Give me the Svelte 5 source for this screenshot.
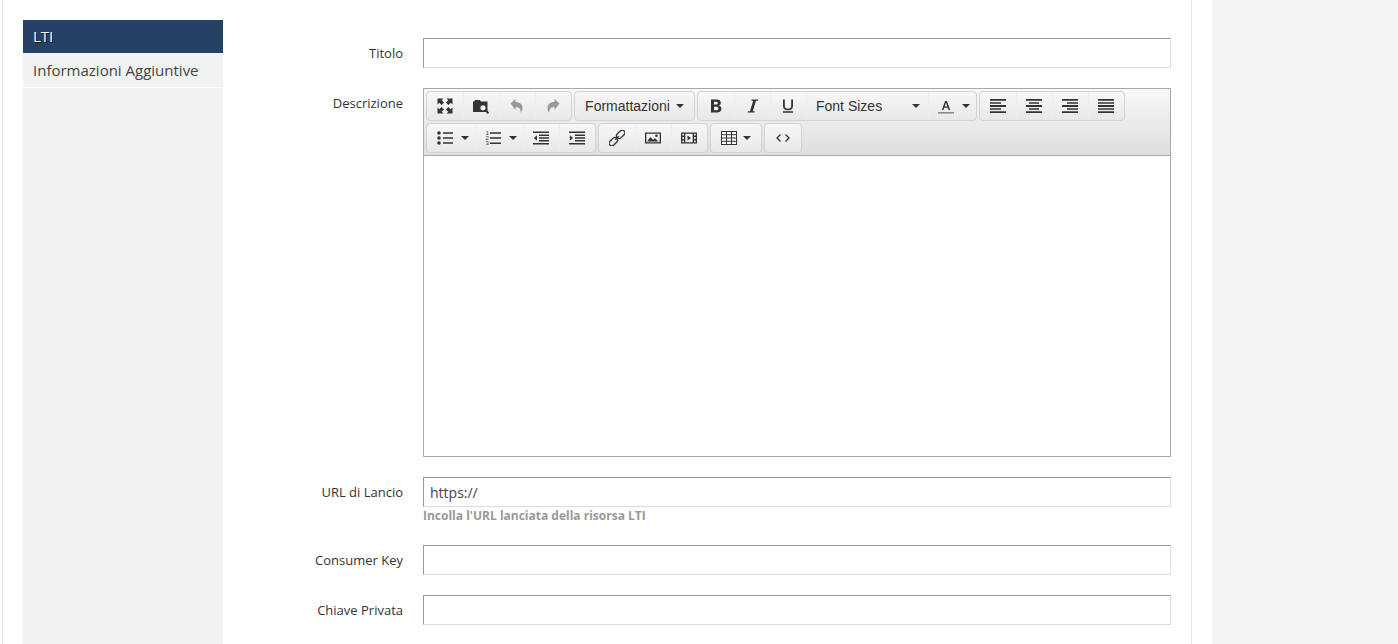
<script>
  const icons = {
    expand: 'M.5.5h6L4.700 2.300 7 4.600 4.600 7 2.300 4.700.5 6.500zM15.500.5v6L13.700 4.700 11.400 7 9 4.600 11.300 2.300 9.500.5zM.5 15.500v-6l1.800 1.800L4.600 9 7 11.400 4.700 13.700 6.500 15.500zM15.500 15.500h-6l1.800-1.800L9 11.400 11.400 9l2.300 2.300 1.800-1.800z',
    undo: 'M1.500 5.500L6.500 1v3c4.500 0 7 2.500 7 6 0 2-.8 3.500-2 5 .5-3-.5-6-5-6v3z',
    redo: 'M14.500 5.500L9.500 1v3c-4.500 0-7 2.500-7 6 0 2 .8 3.500 2 5-.5-3 .5-6 5-6v3z',
    bold: 'M3 1.500h5.600c2.700 0 4.200 1.200 4.200 3.300 0 1.300-.7 2.300-1.900 2.800 1.500.4 2.500 1.600 2.500 3.100 0 2.400-1.700 3.800-4.600 3.800H3zM6 3.700v2.900h2.100c1.200 0 1.700-.5 1.700-1.500s-.6-1.400-1.700-1.400zM6 8.700v3.600h2.400c1.300 0 2-.6 2-1.800s-.7-1.800-2-1.800z',
    italic: 'M7.700 1.500h6.600l-.3 1.200h-2L8.800 13.300h1.900l-.3 1.200H3.700l.3-1.200h2L9.200 2.700H7.400z',
    underline: 'M3 1.500h1.800V8c0 1.700 1.100 2.700 3.200 2.700s3.200-1 3.200-2.700V1.500H13V8c0 2.800-1.900 4.300-5 4.300S3 10.800 3 8zM3 13.300h10v1.500H3z',
    alignLeft: 'M0 1h16v1.800H0zM0 4.200h11v1.600H0zM0 7.100h16v1.800H0zM0 10.200h11v1.600H0zM0 13.200h16v1.800H0z',
    alignCenter: 'M0 1h16v1.800H0zM3 4.200h10v1.600H3zM0 7.100h16v1.800H0zM3 10.200h10v1.600H3zM0 13.200h16v1.800H0z',
    alignRight: 'M0 1h16v1.800H0zM5 4.200h11v1.600H5zM0 7.100h16v1.800H0zM5 10.200h11v1.600H5zM0 13.200h16v1.800H0z',
    justify: 'M0 1h16v1.800H0zM0 4.200h16v1.600H0zM0 7.100h16v1.800H0zM0 10.200h16v1.600H0zM0 13.200h16v1.800H0z',
    outdent: 'M0 1.500h16v1.600H0zM6 4.500h10v1.400H6zM6 7.300h10v1.400H6zM6 10.100h10v1.400H6zM0 13h16v1.600H0zM4 5.200v5.600L.8 8z',
    indent: 'M0 1.500h16v1.600H0zM6 4.500h10v1.400H6zM6 7.300h10v1.400H6zM6 10.100h10v1.400H6zM0 13h16v1.600H0zM.8 5.200v5.600L4 8z',
    ul: 'M6 2.200h10v1.600H6zM6 7.200h10v1.600H6zM6 12.200h10v1.600H6zM2 1.200a1.800 1.800 0 1 1 0 3.600 1.800 1.800 0 0 1 0-3.600zM2 6.200a1.800 1.800 0 1 1 0 3.600 1.800 1.800 0 0 1 0-3.600zM2 11.200a1.800 1.800 0 1 1 0 3.600 1.800 1.800 0 0 1 0-3.600z',
    picture: 'M0 2.500h16v11H0zM1.300 3.800v8.400h13.400V3.800zM2 11.500l3.500-4.500 2.500 2.700 2-1.400 3.500 3.200zM11.500 4.500a1.300 1.300 0 1 1 0 2.600 1.300 1.300 0 0 1 0-2.600z',
    film: 'M0 2.500h16v11H0zM3 3.700H1.300v1.900H3zM3 7H1.300v2H3zM3 10.400H1.300v1.900H3zM14.700 3.700H13v1.900h1.700zM14.700 7H13v2h1.700zM14.700 10.400H13v1.900h1.700zM4.300 3.700v8.600h7.400V3.700zM6.500 5.500L10 8l-3.500 2.500z'
  };

  const row1 = [
    [{ icon: 'expand' }, { icon: 'folder' }, { icon: 'undo', off: true }, { icon: 'redo', off: true }],
    [{ text: 'Formattazioni', caret: true, w: 119 }],
    [
      { icon: 'bold' }, { icon: 'italic' }, { icon: 'underline' },
      { text: 'Font Sizes', caret: true, w: 122, wide: true },
      { icon: 'colorA', caret: true, w: 48 }
    ],
    [{ icon: 'alignLeft' }, { icon: 'alignCenter' }, { icon: 'alignRight' }, { icon: 'justify' }]
  ];

  const row2 = [
    [{ icon: 'ul', caret: true, w: 48 }, { icon: 'ol', caret: true, w: 48 }, { icon: 'outdent' }, { icon: 'indent' }],
    [{ icon: 'link' }, { icon: 'picture' }, { icon: 'film' }],
    [{ icon: 'table', caret: true, w: 50 }],
    [{ icon: 'code' }]
  ];

  const toolbar = [row1, row2];
</script>

<div class="page">
  <div class="panel">
    <nav class="sidebar">
      <div class="tab active">LTI</div>
      <div class="tab">Informazioni Aggiuntive</div>
    </nav>

    <form class="form">
      <div class="field">
        <label for="titolo">Titolo</label>
        <div class="control"><input id="titolo" type="text" /></div>
      </div>

      <div class="field">
        <span class="label">Descrizione</span>
        <div class="control">
          <div class="editor">
            <div class="toolbar">
              {#each toolbar as row}
                <div class="tool-row">
                  {#each row as group}
                    <div class="group">
                      {#each group as b}
                        <button type="button" class="btn" class:off={b.off} class:wide={b.wide} class:split={b.icon && b.caret && b.icon !== 'table'} style={b.w ? `width:${b.w}px` : ''}>
                          {#if b.text}
                            <span class="btn-text">{b.text}</span>
                          {:else if b.icon === 'folder'}
                            <svg width="16" height="16" viewBox="0 0 16 16">
                              <path d="M1 3.500L2 2h5l1 1.500h6.500V14H0V3.500z" fill="#333" />
                              <circle cx="10" cy="9.800" r="3.300" fill="#eee" stroke="#333" stroke-width="1.400" />
                              <path d="M12.300 12.100L15.500 15.300" stroke="#333" stroke-width="1.900" />
                            </svg>
                          {:else if b.icon === 'link'}
                            <svg width="16" height="16" viewBox="0 0 16 16" fill="none" stroke="#333" stroke-width="1.300">
                              <g transform="rotate(-45 8 8)">
                                <rect x="-2" y="5.300" width="9.500" height="5.400" rx="2.700" />
                                <rect x="8.500" y="5.300" width="9.500" height="5.400" rx="2.700" />
                                <path d="M5.500 8h5" />
                              </g>
                            </svg>
                          {:else if b.icon === 'code'}
                            <svg width="16" height="16" viewBox="0 0 16 16" fill="none" stroke="#333" stroke-width="1.300">
                              <path d="M5.500 4.500L2 8l3.500 3.500M10.500 4.500L14 8l-3.500 3.500" />
                            </svg>
                          {:else if b.icon === 'ol'}
                            <svg width="16" height="16" viewBox="0 0 16 16">
                              <path d="M5 2.200h11v1.500H5zM5 7.300h11v1.500H5zM5 12.400h11v1.500H5z" fill="#333" />
                              <text x="0.500" y="5" class="num">1</text>
                              <text x="0.500" y="10.200" class="num">2</text>
                              <text x="0.500" y="15.400" class="num">3</text>
                            </svg>
                          {:else if b.icon === 'table'}
                            <svg width="16" height="16" viewBox="0 0 16 16" fill="#fff" stroke="#333" stroke-width="1">
                              <rect x="0.500" y="1.500" width="15" height="13" />
                              <path d="M5.500 1.500v13M10.500 1.500v13M.5 4.700h15M.5 8h15M.5 11.300h15" fill="none" />
                            </svg>
                          {:else if b.icon === 'colorA'}
                            <svg width="16" height="16" viewBox="0 0 16 16">
                              <path d="M7.100 3h1.800l3.300 9h-1.600l-.8-2.300H6.200L5.400 12H3.800zM6.700 8.400h2.600L8 4.700z" fill="#333" fill-rule="evenodd" />
                              <path d="M0 14h16v1.600H0z" fill="#888" />
                            </svg>
                          {:else}
                            <svg width="16" height="16" viewBox="0 0 16 16">
                              <path d={icons[b.icon]} fill="currentColor" fill-rule="evenodd" />
                            </svg>
                          {/if}
                          {#if b.caret}<span class="caret"></span>{/if}
                        </button>
                      {/each}
                    </div>
                  {/each}
                </div>
              {/each}
            </div>
          </div>
        </div>
      </div>

      <div class="field">
        <label for="url">URL di Lancio</label>
        <div class="control">
          <input id="url" type="text" value="https://" />
          <p class="help">Incolla l'URL lanciata della risorsa LTI</p>
        </div>
      </div>

      <div class="field">
        <label for="key">Consumer Key</label>
        <div class="control"><input id="key" type="text" /></div>
      </div>

      <div class="field">
        <label for="secret">Chiave Privata</label>
        <div class="control"><input id="secret" type="text" /></div>
      </div>
    </form>
  </div>
  <div class="gutter"></div>
  <div class="aside"></div>
</div>

<style>
  :global(body) {
    margin: 0;
    background: #fff;
  }

  .page {
    display: flex;
    height: 644px;
    overflow: hidden;
    font-family: "Open Sans", sans-serif;
    color: #333;
  }

  .panel {
    display: flex;
    box-sizing: border-box;
    width: 1190px;
    margin-left: 2px;
    padding: 20px 20px 0 20px;
    border-left: 1px solid #e6e6e6;
    border-right: 1px solid #e6e6e6;
  }

  .gutter {
    width: 20px;
  }

  .aside {
    flex: 1;
    background: #f4f4f4;
  }

  .sidebar {
    width: 200px;
    flex: none;
    background: #f1f3f2;
  }

  .tab {
    box-sizing: border-box;
    height: 33px;
    padding: 0 10px;
    font-size: 15px;
    line-height: 33px;
    color: #444;
  }

  .tab + .tab {
    height: 35px;
    line-height: 35px;
    border-bottom: 1px solid #fff;
  }

  .active {
    background: #254265;
    color: #fff;
    text-shadow: 1px 1px 0 #111;
  }

  .form {
    flex: 1;
    padding-top: 18px;
  }

  .field {
    display: flex;
    gap: 20px;
    margin-bottom: 20px;
  }

  label,
  .label {
    width: 180px;
    flex: none;
    padding-top: 6px;
    font-size: 13px;
    line-height: 18px;
    text-align: right;
    color: #333;
  }

  .control {
    flex: 1;
    min-width: 0;
  }

  input {
    display: block;
    box-sizing: border-box;
    width: 100%;
    height: 30px;
    padding: 0 6px;
    border: 1px solid;
    border-color: #999 #ddd #ddd #999;
    font-family: inherit;
    font-size: 14px;
    color: #444;
    background: #fff;
    outline: none;
  }

  .help {
    margin: 0;
    font-size: 12px;
    font-weight: 700;
    line-height: 18px;
    color: #999;
  }

  .editor {
    box-sizing: border-box;
    height: 369px;
    border: 1px solid #a9a9a9;
    background: #fff;
  }

  .toolbar {
    box-sizing: border-box;
    height: 67px;
    padding: 2px;
    border-bottom: 1px solid #a9a9a9;
    background: linear-gradient(#f8f8f8, #dedede);
  }

  .tool-row {
    display: flex;
    gap: 2px;
    height: 30px;
  }

  .tool-row + .tool-row {
    margin-top: 2px;
  }

  .group {
    display: flex;
    border: 1px solid #d2d2d2;
    border-radius: 4px;
    background: linear-gradient(#f7f7f7, #e8e8e8);
  }

  .btn {
    display: flex;
    align-items: center;
    justify-content: center;
    gap: 6px;
    box-sizing: border-box;
    width: 36px;
    padding: 0;
    border: 0;
    background: none;
    box-shadow: inset 1px 0 #ededed;
    color: #333;
    font-family: "Liberation Sans", Arial, sans-serif;
    font-size: 14px;
  }

  .btn:first-child {
    box-shadow: none;
  }

  .off {
    color: #999;
  }

  .wide {
    justify-content: space-between;
    padding: 0 8px 0 10px;
  }

  .split {
    gap: 8px;
    padding-left: 4px;
  }

  .caret {
    width: 0;
    height: 0;
    border-top: 4px solid #333;
    border-left: 4px solid transparent;
    border-right: 4px solid transparent;
  }

  .num {
    font-family: "Liberation Sans", sans-serif;
    font-size: 6px;
    fill: #333;
  }
</style>
